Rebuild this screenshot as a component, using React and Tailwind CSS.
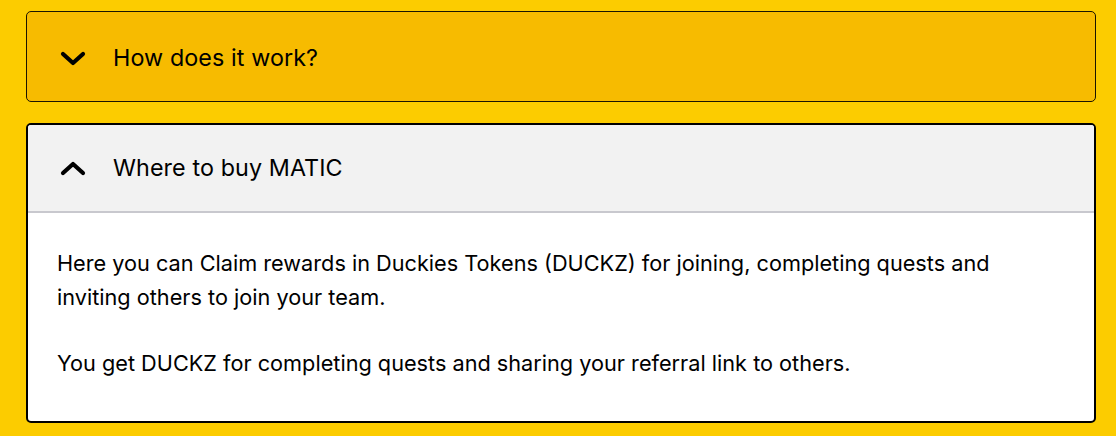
const font = { fontFamily: 'Inter, "Noto Sans", sans-serif' };

function Chevron({ up }) {
  return (
    <svg width="26" height="15" viewBox="0 0 26 15" className="shrink-0">
      <polyline
        points={up ? '3,12 13,3 23,12' : '3,3 13,12 23,3'}
        fill="none"
        stroke="black"
        strokeWidth="4.2"
        strokeLinecap="round"
        strokeLinejoin="round"
      />
    </svg>
  );
}

export default function App() {
  return (
    <div className="w-[1116px] h-[436px] bg-[#fccc00] pl-[26px] pr-[20px] pt-[11px] flex flex-col gap-[21px] text-black" style={font}>
      {/* closed item */}
      <div className="h-[91px] rounded-[5px] border border-[#1a1400] bg-[#f7bb00] flex items-center pt-[3px]">
        <div className="ml-[33px]"><Chevron /></div>
        <span className="ml-[27px] text-[23.3px] tracking-[0.1px]">How does it work?</span>
      </div>

      {/* open item */}
      <div className="h-[300px] rounded-[5px] border-2 border-black bg-white overflow-hidden flex flex-col">
        <div className="h-[88px] bg-[#f2f2f2] border-b-2 border-[#c8c8ce] flex items-center">
          <div className="ml-[32px]"><Chevron up /></div>
          <span className="ml-[27px] text-[23.3px] tracking-[0.1px]">Where to buy MATIC</span>
        </div>
        <div className="px-[29px] pt-[33px] text-[21.7px] leading-[34px]">
          <p className="max-w-[970px]">Here you can Claim rewards in Duckies Tokens (DUCKZ) for joining, completing quests and inviting others to join your team.</p>
          <p className="mt-[32px]">You get DUCKZ for completing quests and sharing your referral link to others.</p>
        </div>
      </div>
    </div>
  );
}
